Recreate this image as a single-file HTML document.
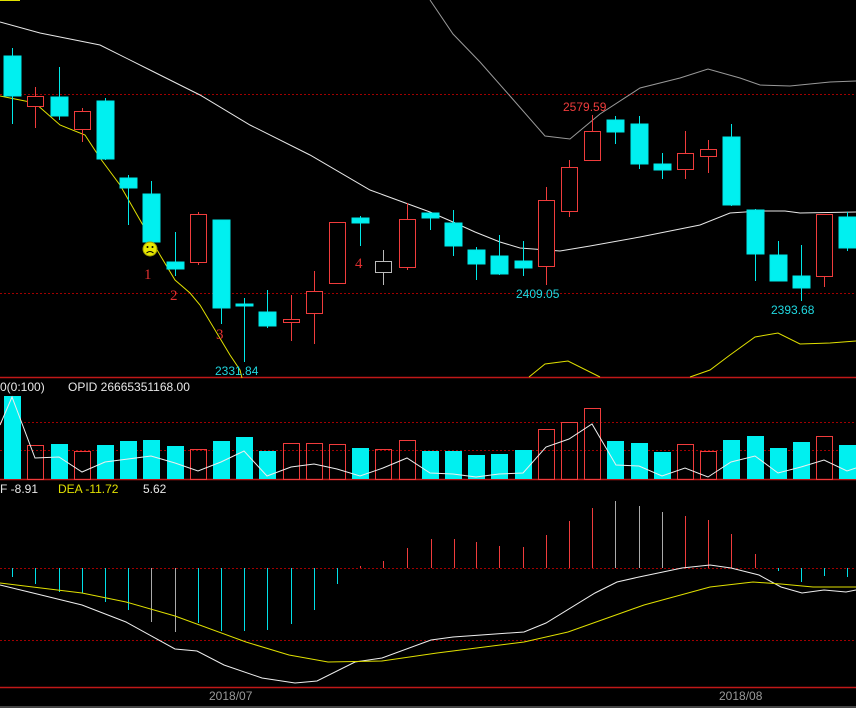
<!DOCTYPE html>
<html><head><meta charset="utf-8"><style>
html,body{margin:0;padding:0;background:#000;width:856px;height:708px;overflow:hidden}
svg{display:block}
text{font-family:"Liberation Sans",sans-serif;font-size:12px}
text.n{font-family:"Liberation Serif",serif;font-size:15px;fill:#e03030}
</style></head><body>
<svg width="856" height="708" viewBox="0 0 856 708" xmlns="http://www.w3.org/2000/svg">
<rect width="856" height="708" fill="#000"/>
<line x1="0" y1="0.5" x2="20" y2="0.5" stroke="#e0e000" stroke-width="1"/>
<g stroke="#a00000" stroke-dasharray="2,2" stroke-width="1">
<line x1="0" y1="94.5" x2="856" y2="94.5"/>
<line x1="0" y1="293.5" x2="856" y2="293.5"/>
<line x1="0" y1="422.5" x2="856" y2="422.5"/>
<line x1="0" y1="450.5" x2="856" y2="450.5"/>
<line x1="0" y1="568.5" x2="856" y2="568.5"/>
<line x1="0" y1="640.5" x2="856" y2="640.5"/>
</g>
<g stroke="#c01818" stroke-width="1.5">
<line x1="0" y1="377.5" x2="856" y2="377.5"/>
<line x1="0" y1="479.5" x2="856" y2="479.5"/>
<line x1="0" y1="687.5" x2="856" y2="687.5"/>
</g>
<rect x="0" y="706" width="856" height="2" fill="#444"/>
<polyline fill="none" stroke="#e8e8e8" stroke-width="1" points="0,22 40,33 100,45 150,70 200,95 250,125 310,155 370,190 430,212 453,222 475,232 500,242 520,248 560,251 590,246 640,237 700,225 730,213 760,211 785,211 800,213 856,212"/>
<polyline fill="none" stroke="#999" stroke-width="1" points="430,0 453,34 480,62 510,96 545,136 570,139 600,114 640,88 680,78 708,69 740,78 760,85 790,86 830,82 856,81"/>
<polyline fill="none" stroke="#e0e000" stroke-width="1" points="0,96 35,103 60,125 85,135 100,158 120,185 140,220 160,255 175,280 190,293 200,305 215,330 230,355 240,370 242,378"/>
<polyline fill="none" stroke="#e0e000" stroke-width="1" points="529,377 545,364 568,361 600,377"/>
<polyline fill="none" stroke="#e0e000" stroke-width="1" points="690,377 710,370 730,355 755,337 778,333 800,344 830,343 856,341"/>
<g stroke="#00e8e8" fill="#00f0f0">
<line x1="12.5" y1="48" x2="12.5" y2="124"/><rect x="4" y="56" width="17" height="40"/>
<line x1="59.5" y1="67" x2="59.5" y2="120"/><rect x="51" y="97" width="17" height="19"/>
<line x1="105.5" y1="98" x2="105.5" y2="160"/><rect x="97" y="101" width="17" height="58"/>
<line x1="128.5" y1="175" x2="128.5" y2="225"/><rect x="120" y="178" width="17" height="10"/>
<line x1="151.5" y1="181" x2="151.5" y2="242"/><rect x="143" y="194" width="17" height="48"/>
<line x1="175.5" y1="232" x2="175.5" y2="276"/><rect x="167" y="262" width="17" height="7"/>
<line x1="221.5" y1="220" x2="221.5" y2="324"/><rect x="213" y="220" width="17" height="88"/>
<line x1="244.5" y1="298" x2="244.5" y2="362"/><rect x="236" y="304" width="17" height="2"/>
<line x1="267.5" y1="290" x2="267.5" y2="328"/><rect x="259" y="312" width="17" height="14"/>
<line x1="360.5" y1="216" x2="360.5" y2="246"/><rect x="352" y="218" width="17" height="5"/>
<line x1="430.5" y1="213" x2="430.5" y2="230"/><rect x="422" y="213" width="17" height="5"/>
<line x1="453.5" y1="210" x2="453.5" y2="256"/><rect x="445" y="223" width="17" height="23"/>
<line x1="476.5" y1="247" x2="476.5" y2="280"/><rect x="468" y="250" width="17" height="14"/>
<line x1="499.5" y1="235" x2="499.5" y2="275"/><rect x="491" y="256" width="17" height="18"/>
<line x1="523.5" y1="241" x2="523.5" y2="276"/><rect x="515" y="261" width="17" height="7"/>
<line x1="615.5" y1="116" x2="615.5" y2="144"/><rect x="607" y="120" width="17" height="12"/>
<line x1="639.5" y1="116" x2="639.5" y2="169"/><rect x="631" y="124" width="17" height="40"/>
<line x1="662.5" y1="153" x2="662.5" y2="179"/><rect x="654" y="164" width="17" height="6"/>
<line x1="731.5" y1="124" x2="731.5" y2="206"/><rect x="723" y="137" width="17" height="68"/>
<line x1="755.5" y1="209" x2="755.5" y2="281"/><rect x="747" y="210" width="17" height="44"/>
<line x1="778.5" y1="241" x2="778.5" y2="281"/><rect x="770" y="255" width="17" height="26"/>
<line x1="801.5" y1="245" x2="801.5" y2="301"/><rect x="793" y="276" width="17" height="12"/>
<line x1="847.5" y1="212" x2="847.5" y2="251"/><rect x="839" y="217" width="17" height="31"/>
</g>
<g stroke="#f03c3c" fill="#000" stroke-width="1">
<line x1="35.5" y1="87" x2="35.5" y2="128"/><rect x="27.5" y="96.5" width="16" height="10"/>
<line x1="82.5" y1="108" x2="82.5" y2="142"/><rect x="74.5" y="111.5" width="16" height="18"/>
<line x1="198.5" y1="212" x2="198.5" y2="265"/><rect x="190.5" y="214.5" width="16" height="48"/>
<line x1="291.5" y1="295" x2="291.5" y2="341"/><rect x="283.5" y="319.5" width="16" height="3"/>
<line x1="314.5" y1="271" x2="314.5" y2="344"/><rect x="306.5" y="291.5" width="16" height="22"/>
<rect x="329.5" y="222.5" width="16" height="61"/>
<line x1="407.5" y1="203" x2="407.5" y2="270"/><rect x="399.5" y="219.5" width="16" height="48"/>
<line x1="546.5" y1="187" x2="546.5" y2="285"/><rect x="538.5" y="200.5" width="16" height="66"/>
<line x1="569.5" y1="160" x2="569.5" y2="217"/><rect x="561.5" y="167.5" width="16" height="44"/>
<line x1="592.5" y1="115" x2="592.5" y2="131"/><rect x="584.5" y="131.5" width="16" height="29"/>
<line x1="685.5" y1="131" x2="685.5" y2="179"/><rect x="677.5" y="153.5" width="16" height="16"/>
<line x1="708.5" y1="140" x2="708.5" y2="173"/><rect x="700.5" y="149.5" width="16" height="7"/>
<line x1="824.5" y1="277" x2="824.5" y2="287"/><rect x="816.5" y="214.5" width="16" height="62"/>
</g>
<g stroke="#bbb" fill="#000">
<line x1="383.5" y1="250" x2="383.5" y2="285"/><rect x="375.5" y="261.5" width="16" height="11"/>
</g>
<circle cx="150" cy="249" r="7" fill="#e8e800" stroke="#a0a000"/>
<circle cx="147.5" cy="247" r="1" fill="#000"/><circle cx="152.5" cy="247" r="1" fill="#000"/>
<path d="M146.5,253 Q150,250 153.5,253" stroke="#000" fill="none" stroke-width="1"/>
<text class="n" x="144" y="279">1</text><text class="n" x="170" y="300">2</text><text class="n" x="216" y="339">3</text><text class="n" x="355" y="268">4</text>
<text x="215" y="375" fill="#20d8e0">2331.84</text>
<text x="563" y="111" fill="#f03c3c">2579.59</text>
<text x="516" y="298" fill="#20d8e0">2409.05</text>
<text x="771" y="314" fill="#20d8e0">2393.68</text>
<text x="0" y="391" fill="#e8e8e8">0(0:100)</text>
<text x="68" y="391" fill="#e8e8e8">OPID 26665351168.00</text>
<g fill="#00f0f0">
<rect x="4" y="396" width="17" height="83"/><rect x="51" y="444" width="17" height="35"/>
<rect x="97" y="445" width="17" height="34"/><rect x="120" y="441" width="17" height="38"/>
<rect x="143" y="440" width="17" height="39"/><rect x="167" y="446" width="17" height="33"/>
<rect x="213" y="441" width="17" height="38"/><rect x="236" y="437" width="17" height="42"/>
<rect x="259" y="451" width="17" height="28"/><rect x="352" y="448" width="17" height="31"/>
<rect x="422" y="451" width="17" height="28"/><rect x="445" y="451" width="17" height="28"/>
<rect x="468" y="455" width="17" height="24"/><rect x="491" y="454" width="17" height="25"/>
<rect x="515" y="450" width="17" height="29"/><rect x="607" y="441" width="17" height="38"/>
<rect x="631" y="443" width="17" height="36"/><rect x="654" y="452" width="17" height="27"/>
<rect x="723" y="440" width="17" height="39"/><rect x="747" y="436" width="17" height="43"/>
<rect x="770" y="448" width="17" height="31"/><rect x="793" y="442" width="17" height="37"/>
<rect x="839" y="445" width="17" height="34"/>
</g>
<g fill="none" stroke="#f03c3c">
<rect x="27.5" y="445.5" width="16" height="34"/><rect x="74.5" y="451.5" width="16" height="28"/>
<rect x="190.5" y="449.5" width="16" height="30"/><rect x="283.5" y="443.5" width="16" height="36"/>
<rect x="306.5" y="443.5" width="16" height="36"/><rect x="329.5" y="444.5" width="16" height="35"/>
<rect x="375.5" y="449.5" width="16" height="30"/><rect x="399.5" y="440.5" width="16" height="39"/>
<rect x="538.5" y="429.5" width="16" height="50"/><rect x="561.5" y="422.5" width="16" height="57"/>
<rect x="584.5" y="408.5" width="16" height="71"/><rect x="677.5" y="444.5" width="16" height="35"/>
<rect x="700.5" y="451.5" width="16" height="28"/><rect x="816.5" y="436.5" width="16" height="43"/>
</g>
<polyline fill="none" stroke="#eee" stroke-width="1" points="0,425 12,397 35,458 59,457 82,472 105,462 128,459 151,456 175,463 198,471 221,462 244,451 267,476 291,467 314,464 337,469 360,476 383,468 407,458 430,473 453,474 476,477 499,474 523,473 546,447 569,439 592,424 616,465 639,466 662,476 685,468 708,477 731,462 755,456 778,473 801,467 824,460 847,471 856,468"/>
<text x="0" y="493" fill="#e8e8e8">F -8.91</text>
<text x="58" y="493" fill="#e0e000">DEA -11.72</text>
<text x="143" y="493" fill="#e8e8e8">5.62</text>
<g stroke="#00e0e8" stroke-width="1">
<line x1="12.5" y1="568" x2="12.5" y2="577"/><line x1="35.5" y1="568" x2="35.5" y2="584"/>
<line x1="59.5" y1="568" x2="59.5" y2="592"/><line x1="82.5" y1="568" x2="82.5" y2="593"/>
<line x1="105.5" y1="568" x2="105.5" y2="602"/><line x1="128.5" y1="568" x2="128.5" y2="610"/>
<line x1="198.5" y1="568" x2="198.5" y2="623"/><line x1="221.5" y1="568" x2="221.5" y2="631"/>
<line x1="244.5" y1="568" x2="244.5" y2="631"/><line x1="267.5" y1="568" x2="267.5" y2="630"/>
<line x1="291.5" y1="568" x2="291.5" y2="624"/><line x1="314.5" y1="568" x2="314.5" y2="610"/>
<line x1="337.5" y1="568" x2="337.5" y2="584"/>
<line x1="778.5" y1="568" x2="778.5" y2="571"/><line x1="801.5" y1="568" x2="801.5" y2="582"/>
<line x1="824.5" y1="568" x2="824.5" y2="576"/><line x1="847.5" y1="568" x2="847.5" y2="577"/>
</g>
<g stroke="#aaa"><line x1="151.5" y1="568" x2="151.5" y2="622"/><line x1="175.5" y1="568" x2="175.5" y2="632"/>
<line x1="615.5" y1="568" x2="615.5" y2="501"/><line x1="639.5" y1="568" x2="639.5" y2="506"/><line x1="662.5" y1="568" x2="662.5" y2="512"/></g>
<g stroke="#f03c3c">
<line x1="360.5" y1="568" x2="360.5" y2="566"/><line x1="383.5" y1="568" x2="383.5" y2="561"/>
<line x1="407.5" y1="568" x2="407.5" y2="548"/><line x1="431.5" y1="568" x2="431.5" y2="539"/>
<line x1="454.5" y1="568" x2="454.5" y2="539"/><line x1="476.5" y1="568" x2="476.5" y2="542"/>
<line x1="499.5" y1="568" x2="499.5" y2="546"/><line x1="523.5" y1="568" x2="523.5" y2="547"/>
<line x1="546.5" y1="568" x2="546.5" y2="535"/><line x1="569.5" y1="568" x2="569.5" y2="521"/>
<line x1="592.5" y1="568" x2="592.5" y2="508"/><line x1="685.5" y1="568" x2="685.5" y2="516"/>
<line x1="708.5" y1="568" x2="708.5" y2="520"/><line x1="731.5" y1="568" x2="731.5" y2="534"/>
<line x1="755.5" y1="568" x2="755.5" y2="554"/>
</g>
<polyline fill="none" stroke="#eee" stroke-width="1" points="0,585 33,593 82,605 126,622 175,649 197,651 224,665 262,678 295,683 317,681 355,662 382,658 431,640 453,637 524,632 546,623 595,593 617,582 639,577 682,568 710,565 731,568 759,575 781,587 802,593 824,590 846,592 856,590"/>
<polyline fill="none" stroke="#e0e000" stroke-width="1" points="0,583 82,593 126,602 175,616 246,642 289,655 328,662 382,661 437,653 524,642 568,632 644,605 710,587 753,582 781,584 813,587 856,587"/>
<text x="209" y="700" fill="#999">2018/07</text>
<text x="719" y="700" fill="#999">2018/08</text>
</svg>
</body></html>
